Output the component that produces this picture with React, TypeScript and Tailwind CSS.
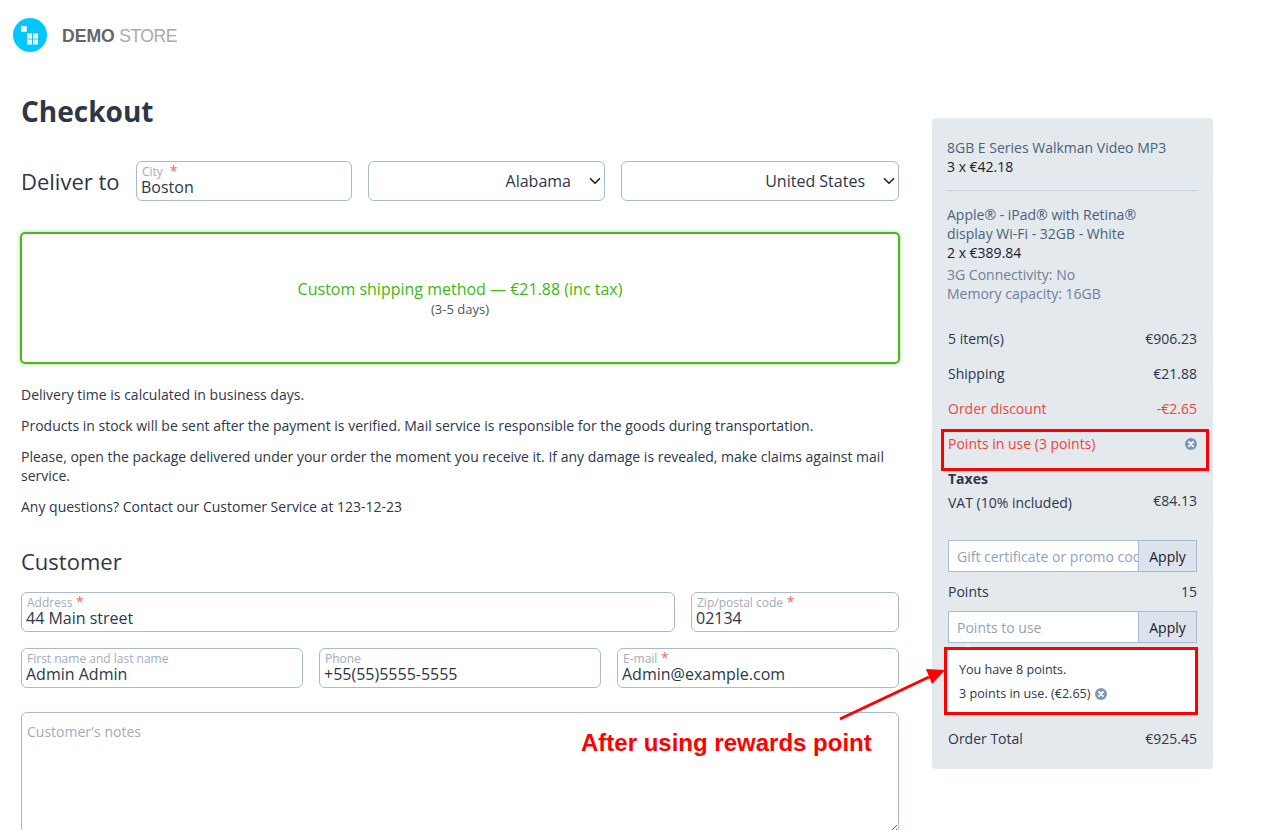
import React from "react";
import { ChevronDown } from "lucide-react";

const FONT = "font-['Open_Sans',sans-serif]";

const Field = ({ label, value, required, className }: { label: string; value: string; required?: boolean; className?: string }) => (
  <div className={`h-10 border border-[#a9bacd] rounded-md pl-[4px] pt-[2px] bg-white ${className ?? ""}`}>
    <div className="h-[15px] text-xs leading-[15px] text-[#a3abb8] pl-px">
      {label}
      {required && <span className="text-[#f56565] text-sm leading-none"> *</span>}
    </div>
    <div className="text-base leading-[19px] text-[#2d3748] -mt-px">{value}</div>
  </div>
);

const Select = ({ value, className }: { value: string; className?: string }) => (
  <div className={`h-10 border border-[#a9bacd] rounded-md bg-white flex items-center justify-end text-base text-[#2d3748] ${className ?? ""}`}>
    <span>{value}</span>
    <ChevronDown className="w-[18px] h-[18px] ml-[15px] text-[#222]" strokeWidth={2.2} />
  </div>
);

const Row = ({ left, right, className }: { left: string; right?: React.ReactNode; className?: string }) => (
  <div className={`flex justify-between items-start h-[35px] text-sm leading-[19px] pl-px ${className ?? ""}`}>
    <span>{left}</span>
    {right}
  </div>
);

const ClearIcon = ({ className }: { className?: string }) => (
  <svg viewBox="0 0 12 12" className={`w-3 h-3 ${className ?? ""}`}>
    <circle cx="6" cy="6" r="6" fill="#7b98b8" />
    <path d="M4 4l4 4M8 4l-4 4" stroke="#fff" strokeWidth="1.8" strokeLinecap="round" />
  </svg>
);

const ApplyInput = ({ placeholder }: { placeholder: string }) => (
  <div className="flex h-8 ml-px border border-[#a9bacd] bg-white">
    <input
      readOnly
      placeholder={placeholder}
      className="flex-1 min-w-0 pl-2 pt-px text-sm outline-none placeholder:text-[#8fa3ba]"
    />
    <div className="w-[58px] flex items-center justify-center pt-px bg-[#dbe3ec] border-l border-[#a9bacd] text-sm text-[#1a202c]">
      Apply
    </div>
  </div>
);

export default function App() {
  return (
    <div className={`relative h-[830px] overflow-hidden bg-white text-[#2d3748] ${FONT}`}>
      <header className="flex items-center pl-[13px] pt-[18px] h-[52px]">
        <svg viewBox="0 0 34 34" className="w-[34px] h-[34px]">
          <circle cx="17" cy="17" r="17" fill="#00c8ff" />
          <rect x="8" y="8" width="5.7" height="5.7" fill="#fff" />
          <rect x="14" y="15.5" width="5" height="5" fill="#fff" />
          <rect x="20" y="15.5" width="5" height="5" fill="#fff" />
          <rect x="14" y="21.5" width="5" height="5" fill="#fff" />
          <rect x="20" y="21.5" width="5" height="5" fill="#fff" />
        </svg>
        <div className="ml-[15px] mt-[3px] font-['Liberation_Sans',sans-serif] text-[17.6px] leading-none">
          <span className="font-bold text-[#666]">DEMO</span>
          <span className="text-[#aaa] tracking-[-0.5px]"> STORE</span>
        </div>
      </header>

      <div className="flex items-start">
        <main className="w-[878px] ml-[21px]">
          <h1 className="mt-[40px] text-[28px] leading-[38px] font-bold">Checkout</h1>

          <div className="flex items-center mt-[31px]">
            <span className="text-[22px] leading-[30px] w-[115px]">Deliver to</span>
            <Field label={"City\u00a0"} value="Boston" required className="w-[216px]" />
            <Select value="Alabama" className="w-[237px] ml-4" />
            <Select value="United States" className="w-[278px] ml-4" />
          </div>

          <div className="h-[132px] -mx-px mt-[31px] border-2 border-[#48b91c] rounded-[5px] shadow-[0_0_4px_rgba(72,185,28,0.5)] flex flex-col items-center justify-center">
            <div className="text-base leading-[22px] text-[#3cb814]">Custom shipping method — €21.88 (inc tax)</div>
            <div className="text-[13px] leading-[18px] text-[#4a5568]">(3-5 days)</div>
          </div>

          <div className="mt-[21px] text-sm leading-[19px] space-y-3">
            <p>Delivery time is calculated in business days.</p>
            <p>Products in stock will be sent after the payment is verified. Mail service is responsible for the goods during transportation.</p>
            <p>Please, open the package delivered under your order the moment you receive it. If any damage is revealed, make claims against mail service.</p>
            <p>Any questions? Contact our Customer Service at 123-12-23</p>
          </div>

          <h2 className="mt-[30px] text-[22px] leading-[30px]">Customer</h2>

          <div className="flex gap-4 mt-4">
            <Field label="Address" value="44 Main street" required className="w-[654px]" />
            <Field label="Zip/postal code" value="02134" required className="flex-1" />
          </div>
          <div className="flex gap-4 mt-4">
            <Field label="First name and last name" value="Admin Admin" className="flex-1" />
            <Field label="Phone" value="+55(55)5555-5555" className="flex-1" />
            <Field label="E-mail" value="Admin@example.com" required className="flex-1" />
          </div>

          <textarea
            readOnly
            placeholder="Customer's notes"
            className="block w-full h-[122px] mt-6 border border-[#a9bacd] rounded-md px-[5px] py-[9px] text-sm leading-[19px] outline-none placeholder:text-[#a3abb8]"
          />
        </main>

        <aside className="w-[281px] ml-[33px] mt-[66px] h-[651px] bg-[#e4e9ee] rounded-[4px] pl-[15px] pr-4 pt-[20px]">
          <div className="text-sm leading-[19px] text-[#4b6279]">8GB E Series Walkman Video MP3</div>
          <div className="text-sm leading-[19px] text-[#1a202c]">3 x €42.18</div>
          <div className="mt-[14px] mb-[14px] h-px bg-[#c5d3e3]" />
          <div className="text-sm leading-[19px] text-[#4b6279] w-[200px]">Apple® - iPad® with Retina® display Wi-Fi - 32GB - White</div>
          <div className="text-sm leading-[19px] text-[#1a202c]">2 x €389.84</div>
          <div className="mt-[3px] text-sm leading-[19px] text-[#718096]">
            <div>3G Connectivity: No</div>
            <div>Memory capacity: 16GB</div>
          </div>

          <div className="mt-[26px]">
            <Row left="5 item(s)" right={<span>€906.23</span>} />
            <Row left="Shipping" right={<span>€21.88</span>} />
            <Row left="Order discount" right={<span>-€2.65</span>} className="text-[#f0443a]" />
            <Row left="Points in use (3 points)" right={<ClearIcon className="mt-1" />} className="text-[#f0443a]" />
            <div className="pl-px text-sm leading-[19px] font-bold">Taxes</div>
            <div className="flex justify-between pl-px mt-[5px] text-sm leading-[19px]">
              <span>VAT (10% included)</span>
              <span className="-mt-0.5">€84.13</span>
            </div>
          </div>

          <div className="mt-[28px]">
            <ApplyInput placeholder="Gift certificate or promo code" />
          </div>
          <div className="flex justify-between pl-px mt-[10px] text-sm leading-[19px]">
            <span>Points</span>
            <span>15</span>
          </div>
          <div className="mt-[10px]">
            <ApplyInput placeholder="Points to use" />
          </div>

          <div className="relative ml-px mt-[7px] h-[63px] bg-white px-[11px] pt-[8px] text-[12.6px] leading-[24px] text-[#2d3748]">
            <span className="absolute -top-[4px] left-[16px] w-2 h-2 rotate-45 bg-white" />
            <div>You have 8 points.</div>
            <div className="flex items-center">
              3 points in use. (€2.65)
              <ClearIcon className="ml-[4px]" />
            </div>
          </div>

          <div className="flex justify-between pl-px mt-[16px] text-sm leading-[19px]">
            <span>Order Total</span>
            <span>€925.45</span>
          </div>
        </aside>
      </div>

      {/* annotations drawn over the screenshot */}
      <div className="absolute left-[941px] top-[429px] w-[268px] h-[42px] border-[3px] border-[#ff0000]" />
      <div className="absolute left-[944px] top-[647px] w-[253.5px] h-[68px] border-[3px] border-[#ff0000]" />
      <svg className="absolute left-[830px] top-[660px] w-[120px] h-[65px]" viewBox="0 0 120 65">
        <path d="M10 59L99 17" stroke="#ff0000" strokeWidth="3" />
        <path d="M115 10L96 9L102 24Z" fill="#ff0000" />
      </svg>
      <div className="absolute left-[581px] top-[729px] font-['Liberation_Sans',sans-serif] font-bold text-2xl leading-[28px] text-[#ff0000]">
        After using rewards point
      </div>
    </div>
  );
}
